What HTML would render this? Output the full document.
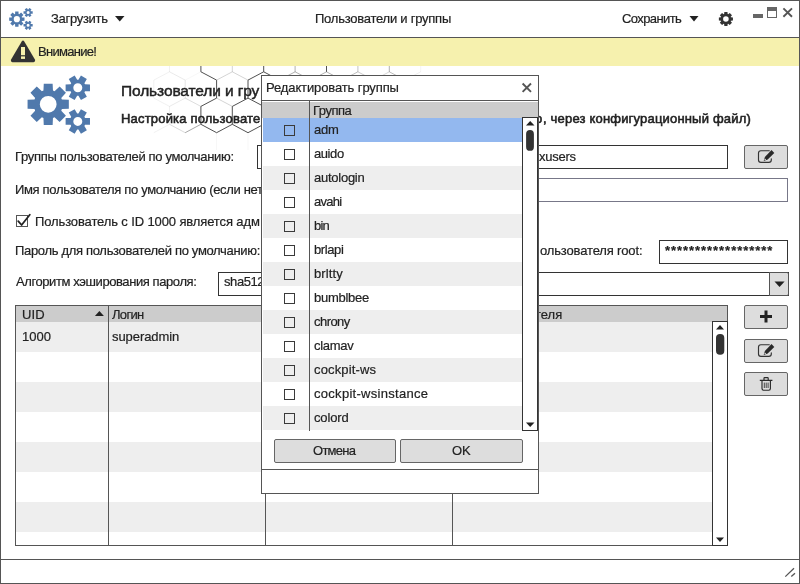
<!DOCTYPE html>
<html><head><meta charset="utf-8"><title>Пользователи и группы</title>
<style>
html,body{margin:0;padding:0;}
body{width:800px;height:584px;overflow:hidden;background:#fff;font-family:"Liberation Sans",sans-serif;font-size:13px;color:#222;position:relative;}
.abs{position:absolute;white-space:nowrap;}
.t{position:absolute;white-space:nowrap;line-height:20px;height:20px;will-change:transform;-webkit-text-stroke:0.2px #222;}
.win{position:absolute;left:0;top:0;width:798px;height:582px;border:1px solid #333;border-right-width:1px;}
.inp{position:absolute;box-sizing:border-box;background:#fff;border:1px solid #333;}
.btn{position:absolute;box-sizing:border-box;background:#dddddd;border:1px solid #666;border-radius:2px;}
.grow{position:absolute;left:263px;width:259px;height:24px;}
.cb{position:absolute;left:21px;top:7px;width:9px;height:9px;border:1px solid #3a3a3a;}
.gt{position:absolute;left:51px;top:4px;line-height:16px;white-space:nowrap;}
</style></head><body>
<!-- window frame -->
<div class="abs" style="left:0;top:0;width:800px;height:584px;background:#fff"></div>
<!-- hex pattern -->
<svg class="abs" style="left:0;top:66px" width="800" height="84" viewBox="0 66 800 84"><path d="M169.5 53.9 L169.5 71.8" stroke="#333" stroke-opacity="0.07" stroke-width="1" fill="none"/>
<path d="M169.5 71.8 L153.8 80.1" stroke="#333" stroke-opacity="0.07" stroke-width="1" fill="none"/>
<path d="M169.5 71.8 L185.2 80.1" stroke="#333" stroke-opacity="0.10" stroke-width="1" fill="none"/>
<path d="M200.9 53.9 L200.9 71.8" stroke="#333" stroke-opacity="0.85" stroke-width="1" fill="none"/>
<path d="M200.9 71.8 L185.2 80.1" stroke="#333" stroke-opacity="0.04" stroke-width="1" fill="none"/>
<path d="M200.9 71.8 L216.6 80.1" stroke="#333" stroke-opacity="0.85" stroke-width="1" fill="none"/>
<path d="M232.3 53.9 L232.3 71.8" stroke="#333" stroke-opacity="0.21" stroke-width="1" fill="none"/>
<path d="M232.3 71.8 L216.6 80.1" stroke="#333" stroke-opacity="0.21" stroke-width="1" fill="none"/>
<path d="M232.3 71.8 L248.0 80.1" stroke="#333" stroke-opacity="0.21" stroke-width="1" fill="none"/>
<path d="M263.7 53.9 L263.7 71.8" stroke="#333" stroke-opacity="0.85" stroke-width="1" fill="none"/>
<path d="M263.7 71.8 L248.0 80.1" stroke="#333" stroke-opacity="0.85" stroke-width="1" fill="none"/>
<path d="M263.7 71.8 L279.4 80.1" stroke="#333" stroke-opacity="0.85" stroke-width="1" fill="none"/>
<path d="M295.1 53.9 L295.1 71.8" stroke="#333" stroke-opacity="0.38" stroke-width="1" fill="none"/>
<path d="M295.1 71.8 L279.4 80.1" stroke="#333" stroke-opacity="0.38" stroke-width="1" fill="none"/>
<path d="M295.1 71.8 L310.8 80.1" stroke="#333" stroke-opacity="0.38" stroke-width="1" fill="none"/>
<path d="M326.5 53.9 L326.5 71.8" stroke="#333" stroke-opacity="0.85" stroke-width="1" fill="none"/>
<path d="M326.5 71.8 L310.8 80.1" stroke="#333" stroke-opacity="0.38" stroke-width="1" fill="none"/>
<path d="M326.5 71.8 L342.2 80.1" stroke="#333" stroke-opacity="0.38" stroke-width="1" fill="none"/>
<path d="M357.9 53.9 L357.9 71.8" stroke="#333" stroke-opacity="0.29" stroke-width="1" fill="none"/>
<path d="M357.9 71.8 L342.2 80.1" stroke="#333" stroke-opacity="0.32" stroke-width="1" fill="none"/>
<path d="M357.9 71.8 L373.6 80.1" stroke="#333" stroke-opacity="0.26" stroke-width="1" fill="none"/>
<path d="M389.3 53.9 L389.3 71.8" stroke="#333" stroke-opacity="0.39" stroke-width="1" fill="none"/>
<path d="M389.3 71.8 L373.6 80.1" stroke="#333" stroke-opacity="0.20" stroke-width="1" fill="none"/>
<path d="M389.3 71.8 L405.0 80.1" stroke="#333" stroke-opacity="0.32" stroke-width="1" fill="none"/>
<path d="M420.7 53.9 L420.7 71.8" stroke="#333" stroke-opacity="0.05" stroke-width="1" fill="none"/>
<path d="M420.7 71.8 L405.0 80.1" stroke="#333" stroke-opacity="0.08" stroke-width="1" fill="none"/>
<path d="M153.8 80.2 L153.8 98.1" stroke="#333" stroke-opacity="0.07" stroke-width="1" fill="none"/>
<path d="M153.8 98.1 L169.5 106.4" stroke="#333" stroke-opacity="0.07" stroke-width="1" fill="none"/>
<path d="M185.2 80.2 L185.2 98.1" stroke="#333" stroke-opacity="0.13" stroke-width="1" fill="none"/>
<path d="M185.2 98.1 L169.5 106.4" stroke="#333" stroke-opacity="0.10" stroke-width="1" fill="none"/>
<path d="M185.2 98.1 L200.9 106.4" stroke="#333" stroke-opacity="0.17" stroke-width="1" fill="none"/>
<path d="M216.6 80.2 L216.6 98.1" stroke="#333" stroke-opacity="0.85" stroke-width="1" fill="none"/>
<path d="M216.6 98.1 L200.9 106.4" stroke="#333" stroke-opacity="0.85" stroke-width="1" fill="none"/>
<path d="M216.6 98.1 L232.3 106.4" stroke="#333" stroke-opacity="0.21" stroke-width="1" fill="none"/>
<path d="M248.0 80.2 L248.0 98.1" stroke="#333" stroke-opacity="0.85" stroke-width="1" fill="none"/>
<path d="M248.0 98.1 L232.3 106.4" stroke="#333" stroke-opacity="0.85" stroke-width="1" fill="none"/>
<path d="M248.0 98.1 L263.7 106.4" stroke="#333" stroke-opacity="0.85" stroke-width="1" fill="none"/>
<path d="M279.4 80.2 L279.4 98.1" stroke="#333" stroke-opacity="0.38" stroke-width="1" fill="none"/>
<path d="M279.4 98.1 L263.7 106.4" stroke="#333" stroke-opacity="0.85" stroke-width="1" fill="none"/>
<path d="M279.4 98.1 L295.1 106.4" stroke="#333" stroke-opacity="0.38" stroke-width="1" fill="none"/>
<path d="M310.8 80.2 L310.8 98.1" stroke="#333" stroke-opacity="0.38" stroke-width="1" fill="none"/>
<path d="M310.8 98.1 L295.1 106.4" stroke="#333" stroke-opacity="0.38" stroke-width="1" fill="none"/>
<path d="M310.8 98.1 L326.5 106.4" stroke="#333" stroke-opacity="0.38" stroke-width="1" fill="none"/>
<path d="M342.2 80.2 L342.2 98.1" stroke="#333" stroke-opacity="0.35" stroke-width="1" fill="none"/>
<path d="M342.2 98.1 L326.5 106.4" stroke="#333" stroke-opacity="0.38" stroke-width="1" fill="none"/>
<path d="M342.2 98.1 L357.9 106.4" stroke="#333" stroke-opacity="0.32" stroke-width="1" fill="none"/>
<path d="M373.6 80.2 L373.6 98.1" stroke="#333" stroke-opacity="0.23" stroke-width="1" fill="none"/>
<path d="M373.6 98.1 L357.9 106.4" stroke="#333" stroke-opacity="0.26" stroke-width="1" fill="none"/>
<path d="M373.6 98.1 L389.3 106.4" stroke="#333" stroke-opacity="0.46" stroke-width="1" fill="none"/>
<path d="M405.0 80.2 L405.0 98.1" stroke="#333" stroke-opacity="0.11" stroke-width="1" fill="none"/>
<path d="M405.0 98.1 L389.3 106.4" stroke="#333" stroke-opacity="0.32" stroke-width="1" fill="none"/>
<path d="M405.0 98.1 L420.7 106.4" stroke="#333" stroke-opacity="0.08" stroke-width="1" fill="none"/>
<path d="M169.5 106.4 L169.5 124.3" stroke="#333" stroke-opacity="0.07" stroke-width="1" fill="none"/>
<path d="M169.5 124.3 L153.8 132.7" stroke="#333" stroke-opacity="0.07" stroke-width="1" fill="none"/>
<path d="M169.5 124.3 L185.2 132.7" stroke="#333" stroke-opacity="0.18" stroke-width="1" fill="none"/>
<path d="M200.9 106.4 L200.9 124.3" stroke="#333" stroke-opacity="0.85" stroke-width="1" fill="none"/>
<path d="M200.9 124.3 L185.2 132.7" stroke="#333" stroke-opacity="0.43" stroke-width="1" fill="none"/>
<path d="M200.9 124.3 L216.6 132.7" stroke="#333" stroke-opacity="0.85" stroke-width="1" fill="none"/>
<path d="M232.3 106.4 L232.3 124.3" stroke="#333" stroke-opacity="0.85" stroke-width="1" fill="none"/>
<path d="M232.3 124.3 L216.6 132.7" stroke="#333" stroke-opacity="0.85" stroke-width="1" fill="none"/>
<path d="M232.3 124.3 L248.0 132.7" stroke="#333" stroke-opacity="0.85" stroke-width="1" fill="none"/>
<path d="M263.7 106.4 L263.7 124.3" stroke="#333" stroke-opacity="0.85" stroke-width="1" fill="none"/>
<path d="M263.7 124.3 L248.0 132.7" stroke="#333" stroke-opacity="0.85" stroke-width="1" fill="none"/>
<path d="M263.7 124.3 L279.4 132.7" stroke="#333" stroke-opacity="0.85" stroke-width="1" fill="none"/>
<path d="M295.1 106.4 L295.1 124.3" stroke="#333" stroke-opacity="0.38" stroke-width="1" fill="none"/>
<path d="M295.1 124.3 L279.4 132.7" stroke="#333" stroke-opacity="0.38" stroke-width="1" fill="none"/>
<path d="M295.1 124.3 L310.8 132.7" stroke="#333" stroke-opacity="0.38" stroke-width="1" fill="none"/>
<path d="M326.5 106.4 L326.5 124.3" stroke="#333" stroke-opacity="0.85" stroke-width="1" fill="none"/>
<path d="M326.5 124.3 L310.8 132.7" stroke="#333" stroke-opacity="0.38" stroke-width="1" fill="none"/>
<path d="M326.5 124.3 L342.2 132.7" stroke="#333" stroke-opacity="0.38" stroke-width="1" fill="none"/>
<path d="M357.9 106.4 L357.9 124.3" stroke="#333" stroke-opacity="0.29" stroke-width="1" fill="none"/>
<path d="M357.9 124.3 L342.2 132.7" stroke="#333" stroke-opacity="0.32" stroke-width="1" fill="none"/>
<path d="M357.9 124.3 L373.6 132.7" stroke="#333" stroke-opacity="0.26" stroke-width="1" fill="none"/>
<path d="M389.3 106.4 L389.3 124.3" stroke="#333" stroke-opacity="0.39" stroke-width="1" fill="none"/>
<path d="M389.3 124.3 L373.6 132.7" stroke="#333" stroke-opacity="0.20" stroke-width="1" fill="none"/>
<path d="M389.3 124.3 L405.0 132.7" stroke="#333" stroke-opacity="0.32" stroke-width="1" fill="none"/>
<path d="M420.7 106.4 L420.7 124.3" stroke="#333" stroke-opacity="0.05" stroke-width="1" fill="none"/>
<path d="M420.7 124.3 L405.0 132.7" stroke="#333" stroke-opacity="0.08" stroke-width="1" fill="none"/>
<path d="M216.6 132.7 L216.6 150.6" stroke="#333" stroke-opacity="0.04" stroke-width="1" fill="none"/>
<path d="M248.0 132.7 L248.0 150.6" stroke="#333" stroke-opacity="0.04" stroke-width="1" fill="none"/>
</svg>
<!-- header -->
<div class="abs" style="left:0;top:37px;width:800px;height:1px;background:#555"></div>
<svg class="abs" style="left:0;top:0" width="800" height="38" viewBox="0 0 800 38">
<path d="M21.94 17.38 L24.49 17.50 L24.49 20.80 L21.94 20.92 L21.70 21.51 L23.42 23.40 L21.09 25.73 L19.20 24.01 L18.61 24.25 L18.49 26.80 L15.19 26.80 L15.07 24.25 L14.48 24.01 L12.59 25.73 L10.26 23.40 L11.98 21.51 L11.74 20.92 L9.19 20.80 L9.19 17.50 L11.74 17.38 L11.98 16.79 L10.26 14.90 L12.59 12.57 L14.48 14.29 L15.07 14.05 L15.19 11.50 L18.49 11.50 L18.61 14.05 L19.20 14.29 L21.09 12.57 L23.42 14.90 L21.70 16.79Z M13.74 19.15 a3.10 3.10 0 1 0 6.20 0 a3.10 3.10 0 1 0 -6.20 0Z" fill="#5079ac" fill-rule="evenodd"/>
<path d="M30.81 11.21 L32.68 11.22 L32.68 13.78 L30.81 13.79 L30.57 14.20 L31.49 15.82 L29.28 17.10 L28.34 15.49 L27.86 15.49 L26.92 17.10 L24.71 15.82 L25.63 14.20 L25.39 13.79 L23.52 13.78 L23.52 11.22 L25.39 11.21 L25.63 10.80 L24.71 9.18 L26.92 7.90 L27.86 9.51 L28.34 9.51 L29.28 7.90 L31.49 9.18 L30.57 10.80Z M26.60 12.50 a1.50 1.50 0 1 0 3.00 0 a1.50 1.50 0 1 0 -3.00 0Z" fill="#5079ac" fill-rule="evenodd"/>
<path d="M30.81 24.01 L32.68 24.02 L32.68 26.58 L30.81 26.59 L30.57 27.00 L31.49 28.62 L29.28 29.90 L28.34 28.29 L27.86 28.29 L26.92 29.90 L24.71 28.62 L25.63 27.00 L25.39 26.59 L23.52 26.58 L23.52 24.02 L25.39 24.01 L25.63 23.60 L24.71 21.98 L26.92 20.70 L27.86 22.31 L28.34 22.31 L29.28 20.70 L31.49 21.98 L30.57 23.60Z M26.60 25.30 a1.50 1.50 0 1 0 3.00 0 a1.50 1.50 0 1 0 -3.00 0Z" fill="#5079ac" fill-rule="evenodd"/>
<path d="M115 16 L124.5 16 L119.75 21.5Z" fill="#222"/>
<path d="M689.5 16 L698.5 16 L694 21.5Z" fill="#222"/>
<path d="M730.90 17.24 L732.93 17.43 L732.93 20.57 L730.90 20.76 L730.68 21.29 L731.98 22.86 L729.76 25.08 L728.19 23.78 L727.66 24.00 L727.47 26.03 L724.33 26.03 L724.14 24.00 L723.61 23.78 L722.04 25.08 L719.82 22.86 L721.12 21.29 L720.90 20.76 L718.87 20.57 L718.87 17.43 L720.90 17.24 L721.12 16.71 L719.82 15.14 L722.04 12.92 L723.61 14.22 L724.14 14.00 L724.33 11.97 L727.47 11.97 L727.66 14.00 L728.19 14.22 L729.76 12.92 L731.98 15.14 L730.68 16.71Z M723.10 19.00 a2.80 2.80 0 1 0 5.60 0 a2.80 2.80 0 1 0 -5.60 0Z" fill="#333" fill-rule="evenodd"/>
<rect x="753" y="14" width="10" height="4" fill="#666"/>
<rect x="767.5" y="7.5" width="9" height="10" fill="#fff" stroke="#666" stroke-width="1"/>
<rect x="767" y="7" width="10" height="4" fill="#666"/>
<path d="M783.4 8.4 L792 16.8 M792 8.4 L783.4 16.8" stroke="#555" stroke-width="1.9" fill="none"/>
</svg>
<!-- warning -->
<div class="abs" style="left:1px;top:38px;width:798px;height:28px;background:#f6f1ae"></div>
<svg class="abs" style="left:0;top:38px" width="60" height="28" viewBox="0 38 60 28">
<path d="M21.7 41.4 Q23 39.6 24.3 41.4 L34.9 59.6 Q35.7 62 33.6 62.2 L12.4 62.2 Q10.3 62 11.1 59.6Z" fill="#333"/>
<rect x="21" y="47" width="4" height="8.2" fill="#f6f1ae"/>
<rect x="21" y="56.4" width="4" height="2.5" fill="#f6f1ae"/>
</svg>
<!-- big gears -->
<svg class="abs" style="left:0;top:66px" width="120" height="80" viewBox="0 66 120 80">
<path d="M61.90 99.55 L68.83 99.86 L68.83 108.74 L61.90 109.05 L61.25 110.63 L65.93 115.75 L59.65 122.03 L54.53 117.35 L52.95 118.00 L52.64 124.93 L43.76 124.93 L43.45 118.00 L41.87 117.35 L36.75 122.03 L30.47 115.75 L35.15 110.63 L34.50 109.05 L27.57 108.74 L27.57 99.86 L34.50 99.55 L35.15 97.97 L30.47 92.85 L36.75 86.57 L41.87 91.25 L43.45 90.60 L43.76 83.67 L52.64 83.67 L52.95 90.60 L54.53 91.25 L59.65 86.57 L65.93 92.85 L61.25 97.97Z M39.80 104.30 a8.40 8.40 0 1 0 16.80 0 a8.40 8.40 0 1 0 -16.80 0Z" fill="#5079ac" fill-rule="evenodd"/>
<path d="M85.02 84.36 L89.98 84.40 L89.98 91.20 L85.02 91.24 L84.39 92.33 L86.84 96.65 L80.95 100.05 L78.43 95.78 L77.17 95.78 L74.65 100.05 L68.76 96.65 L71.21 92.33 L70.58 91.24 L65.62 91.20 L65.62 84.40 L70.58 84.36 L71.21 83.27 L68.76 78.95 L74.65 75.55 L77.17 79.82 L78.43 79.82 L80.95 75.55 L86.84 78.95 L84.39 83.27Z M73.30 87.80 a4.50 4.50 0 1 0 9.00 0 a4.50 4.50 0 1 0 -9.00 0Z" fill="#5079ac" fill-rule="evenodd"/>
<path d="M85.02 117.96 L89.98 118.00 L89.98 124.80 L85.02 124.84 L84.39 125.93 L86.84 130.25 L80.95 133.65 L78.43 129.38 L77.17 129.38 L74.65 133.65 L68.76 130.25 L71.21 125.93 L70.58 124.84 L65.62 124.80 L65.62 118.00 L70.58 117.96 L71.21 116.87 L68.76 112.55 L74.65 109.15 L77.17 113.42 L78.43 113.42 L80.95 109.15 L86.84 112.55 L84.39 116.87Z M73.30 121.40 a4.50 4.50 0 1 0 9.00 0 a4.50 4.50 0 1 0 -9.00 0Z" fill="#5079ac" fill-rule="evenodd"/>
</svg>
<!-- form -->
<div class="inp" style="left:257px;top:145px;width:471px;height:24px;"></div>
<div class="btn" style="left:744px;top:145px;width:44px;height:24px;"></div>
<div class="inp" style="left:300px;top:178px;width:488px;height:24px;border-color:#777788"></div>
<div class="inp" style="left:16px;top:215px;width:12px;height:12px;border-color:#555"></div>
<svg class="abs" style="left:14px;top:210px" width="22" height="20" viewBox="14 210 22 20"><path d="M18.2 221.2 L21.6 225 L29.8 214.8" stroke="#222" stroke-width="1.8" fill="none" stroke-linecap="round" stroke-linejoin="round"/></svg>
<div class="inp" style="left:659px;top:240px;width:129px;height:24px;"></div>
<div class="inp" style="left:218px;top:272px;width:571px;height:24px;"></div>
<div class="btn" style="left:769px;top:272px;width:20px;height:24px;border-radius:0 2px 2px 0;border-color:#555"></div>
<svg class="abs" style="left:769px;top:273px" width="20" height="22" viewBox="769 273 20 22"><path d="M774.5 281.4 L784.6 281.4 L779.55 287Z" fill="#222"/></svg>
<!-- table -->
<div class="abs" style="left:15px;top:305px;width:712px;height:240px;border:1px solid #555;box-sizing:content-box;width:711px;height:239px;background:#fff"></div>
<div class="abs" style="left:16px;top:306px;width:711px;height:16px;background:#cccccc"></div>
<div style="position:absolute;left:16px;top:322px;width:696px;height:30px;background:#eeeeee"></div>
<div style="position:absolute;left:16px;top:352px;width:696px;height:30px;background:#ffffff"></div>
<div style="position:absolute;left:16px;top:382px;width:696px;height:30px;background:#eeeeee"></div>
<div style="position:absolute;left:16px;top:412px;width:696px;height:30px;background:#ffffff"></div>
<div style="position:absolute;left:16px;top:442px;width:696px;height:30px;background:#eeeeee"></div>
<div style="position:absolute;left:16px;top:472px;width:696px;height:30px;background:#ffffff"></div>
<div style="position:absolute;left:16px;top:502px;width:696px;height:30px;background:#eeeeee"></div>
<div style="position:absolute;left:16px;top:532px;width:696px;height:13px;background:#ffffff"></div>

<div class="abs" style="left:108px;top:306px;width:1px;height:240px;background:#555"></div>
<div class="abs" style="left:265px;top:306px;width:1px;height:240px;background:#555"></div>
<div class="abs" style="left:452px;top:306px;width:1px;height:240px;background:#555"></div>
<svg class="abs" style="left:90px;top:306px" width="20" height="16" viewBox="90 306 20 16"><path d="M94.9 316.1 L103.9 316.1 L99.4 311.1Z" fill="#222"/></svg>
<!-- table scrollbar -->
<div class="abs" style="left:712px;top:321px;width:14px;height:223px;border:1px solid #333;background:#fff"></div>
<svg class="abs" style="left:712px;top:321px" width="16" height="225" viewBox="712 321 16 225">
<path d="M716 329.5 L724 329.5 L720 325Z" fill="#222"/>
<rect x="716" y="334" width="8.3" height="20.8" rx="4" fill="#333"/>
<path d="M716 537.5 L724 537.5 L720 542Z" fill="#222"/>
</svg>
<!-- right buttons -->
<div class="btn" style="left:744px;top:305px;width:44px;height:24px;"></div>
<div class="btn" style="left:744px;top:339px;width:44px;height:24px;"></div>
<div class="btn" style="left:744px;top:372px;width:44px;height:24px;"></div>
<svg class="abs" style="left:744px;top:140px" width="44" height="260" viewBox="744 140 44 260">
<path d="M760 316.5 H772 M766 310.5 V322.5" stroke="#222" stroke-width="3" fill="none"/>
<!-- edit icons -->
<g><path d="M769.3 150.7 H760.9 Q758.5 150.7 758.5 153.1 V160 Q758.5 162.4 760.9 162.4 H768.9 Q771.3 162.4 771.3 160 V158.9" fill="none" stroke="#333" stroke-width="1.15" stroke-linecap="round"/><path d="M763.7 161 L764.9 156.9 L771.5 150.1 L774.3 152.9 L767.7 159.6 Z" fill="#2a2a2a"/><circle cx="765.2" cy="159.4" r="0.75" fill="#ddd"/></g>
<g transform="translate(0 194)"><path d="M769.3 150.7 H760.9 Q758.5 150.7 758.5 153.1 V160 Q758.5 162.4 760.9 162.4 H768.9 Q771.3 162.4 771.3 160 V158.9" fill="none" stroke="#333" stroke-width="1.15" stroke-linecap="round"/><path d="M763.7 161 L764.9 156.9 L771.5 150.1 L774.3 152.9 L767.7 159.6 Z" fill="#2a2a2a"/><circle cx="765.2" cy="159.4" r="0.75" fill="#ddd"/></g>
<!-- trash -->
<g fill="none" stroke="#2a2a2a" stroke-width="1.15"><path d="M759.8 380.3 H772.4 M764 380 V378.2 Q764 377.6 764.6 377.6 H767.6 Q768.2 377.6 768.2 378.2 V380 M762 380.6 V388.6 Q762 390.2 763.6 390.2 H768.8 Q770.4 390.2 770.4 388.6 V380.6"/><path d="M764.3 382.6 V388 M766.2 382.6 V388 M768.1 382.6 V388" stroke-width="0.85"/></g>
</svg>
<!-- status bar -->
<div class="abs" style="left:0;top:559px;width:800px;height:1px;background:#555"></div>
<svg class="abs" style="left:780px;top:564px" width="18" height="16" viewBox="780 564 18 16"><path d="M785.3 576.6 L794 568.3 M791.3 576.6 L795 573.2" stroke="#555" stroke-width="1.3" fill="none"/></svg>
<div class="t" style="left:51.00px;top:9px;letter-spacing:-0.298px">Загрузить</div>
<div class="t" style="left:315.30px;top:9px;letter-spacing:-0.242px">Пользователи и группы</div>
<div class="t" style="left:622.00px;top:9px;letter-spacing:-0.603px">Сохранить</div>
<div class="t" style="left:38.40px;top:42px;letter-spacing:-0.719px">Внимание!</div>
<div class="t" style="left:121.00px;top:81px;letter-spacing:-0.114px;font-size:15.5px;-webkit-text-stroke:0.45px #222">Пользователи и гру</div>
<div class="t" style="left:121.00px;top:109px;letter-spacing:0.184px;-webkit-text-stroke:0.55px #222">Настройка пользовате</div>
<div class="t" style="left:542.50px;top:109px;letter-spacing:0.186px;-webkit-text-stroke:0.55px #222">, через конфигурационный файл)</div>
<div class="t" style="left:534.50px;top:109px;letter-spacing:0.000px;-webkit-text-stroke:0.55px #222">о</div>
<div class="t" style="left:14.50px;top:147px;letter-spacing:-0.319px">Группы пользователей по умолчанию:</div>
<div class="t" style="left:539.00px;top:147px;letter-spacing:-0.258px">xusers</div>
<div class="t" style="left:14.50px;top:180px;letter-spacing:-0.329px">Имя пользователя по умолчанию (если нет</div>
<div class="t" style="left:35.10px;top:212px;letter-spacing:-0.123px">Пользователь с ID 1000 является адм</div>
<div class="t" style="left:14.50px;top:241px;letter-spacing:-0.320px">Пароль для пользователей по умолчанию:</div>
<div class="t" style="left:539.50px;top:241px;letter-spacing:-0.150px">ользователя root:</div>
<div class="t" style="left:664.80px;top:241px;letter-spacing:0.953px;font-weight:bold">******************</div>
<div class="t" style="left:15.50px;top:272px;letter-spacing:-0.414px">Алгоритм хэширования пароля:</div>
<div class="t" style="left:223.70px;top:272px;letter-spacing:-0.424px">sha512</div>
<div class="t" style="left:21.60px;top:305px;letter-spacing:0.150px">UID</div>
<div class="t" style="left:112.40px;top:305px;letter-spacing:-0.691px">Логин</div>
<div class="t" style="left:535.30px;top:305px;letter-spacing:0.003px">теля</div>
<div class="t" style="left:21.60px;top:327px;letter-spacing:0.037px">1000</div>
<div class="t" style="left:112.40px;top:327px;letter-spacing:-0.066px">superadmin</div>

<!-- dialog -->
<div class="abs" style="left:261px;top:75px;width:276px;height:417px;border:1px solid #555;background:#fff;"></div>
<div class="abs" style="left:262px;top:100px;width:276px;height:1px;background:#555"></div>
<div class="abs" style="left:262px;top:102px;width:276px;height:16px;background:#cccccc"></div>
<div class="grow" style="top:118px;background:#93b8ef"><span class="cb"></span></div>
<div class="grow" style="top:142px;background:#ffffff"><span class="cb"></span></div>
<div class="grow" style="top:166px;background:#eeeeee"><span class="cb"></span></div>
<div class="grow" style="top:190px;background:#ffffff"><span class="cb"></span></div>
<div class="grow" style="top:214px;background:#eeeeee"><span class="cb"></span></div>
<div class="grow" style="top:238px;background:#ffffff"><span class="cb"></span></div>
<div class="grow" style="top:262px;background:#eeeeee"><span class="cb"></span></div>
<div class="grow" style="top:286px;background:#ffffff"><span class="cb"></span></div>
<div class="grow" style="top:310px;background:#eeeeee"><span class="cb"></span></div>
<div class="grow" style="top:334px;background:#ffffff"><span class="cb"></span></div>
<div class="grow" style="top:358px;background:#eeeeee"><span class="cb"></span></div>
<div class="grow" style="top:382px;background:#ffffff"><span class="cb"></span></div>
<div class="grow" style="top:406px;background:#eeeeee"><span class="cb"></span></div>

<div class="abs" style="left:309px;top:101px;width:1px;height:330px;background:#555"></div>
<div class="abs" style="left:522px;top:117px;width:14px;height:312px;border:1px solid #333;background:#fff;"></div>
<div class="btn" style="left:274px;top:439px;width:122px;height:24px;"></div>
<div class="btn" style="left:400px;top:439px;width:123px;height:24px;"></div>
<div class="abs" style="left:262px;top:469px;width:276px;height:1px;background:#555"></div>
<svg class="abs" style="left:262px;top:75px" width="277" height="418" viewBox="262 75 277 418">
<path d="M522.6 83.5 L531 91.9 M531 83.5 L522.6 91.9" stroke="#555" stroke-width="1.9" fill="none"/>
<path d="M526 125.5 L534.5 125.5 L530.2 121Z" fill="#222"/>
<rect x="526.1" y="130" width="7.8" height="20.8" rx="3.9" fill="#333"/>
<path d="M526 422.5 L534.5 422.5 L530.2 427Z" fill="#222"/>
</svg>
<div class="t" style="left:266.00px;top:78px;letter-spacing:-0.117px">Редактировать группы</div>
<div class="t" style="left:313.20px;top:101px;letter-spacing:-0.495px">Группа</div>
<div class="t" style="left:313.10px;top:441px;letter-spacing:-0.723px">Отмена</div>
<div class="t" style="left:451.60px;top:441px;letter-spacing:-0.012px">OK</div>
<div class="t" style="left:314.30px;top:120px;letter-spacing:-0.180px">adm</div>
<div class="t" style="left:314.30px;top:144px;letter-spacing:-0.420px">auido</div>
<div class="t" style="left:314.30px;top:168px;letter-spacing:-0.255px">autologin</div>
<div class="t" style="left:314.30px;top:192px;letter-spacing:-0.747px">avahi</div>
<div class="t" style="left:314.30px;top:216px;letter-spacing:-0.809px">bin</div>
<div class="t" style="left:314.30px;top:240px;letter-spacing:-0.401px">brlapi</div>
<div class="t" style="left:314.30px;top:264px;letter-spacing:0.106px">brltty</div>
<div class="t" style="left:314.30px;top:288px;letter-spacing:-0.281px">bumblbee</div>
<div class="t" style="left:314.30px;top:312px;letter-spacing:-0.544px">chrony</div>
<div class="t" style="left:314.30px;top:336px;letter-spacing:-0.295px">clamav</div>
<div class="t" style="left:314.30px;top:360px;letter-spacing:0.136px">cockpit-ws</div>
<div class="t" style="left:314.30px;top:384px;letter-spacing:0.290px">cockpit-wsinstance</div>
<div class="t" style="left:314.30px;top:408px;letter-spacing:-0.155px">colord</div>

<!-- outer border -->
<div class="abs" style="left:0;top:0;width:798px;height:582px;border:1px solid #555;pointer-events:none"></div>
</body></html>
